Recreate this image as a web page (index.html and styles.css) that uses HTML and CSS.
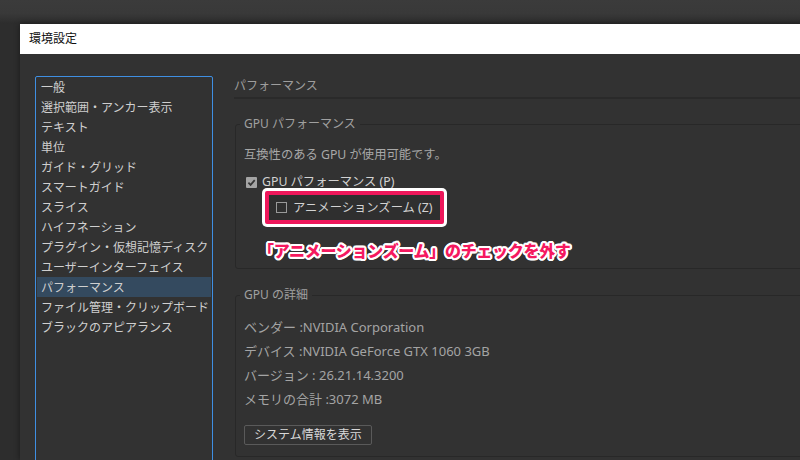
FILE: index.html
```html
<!DOCTYPE html>
<html lang="ja">
<head>
<meta charset="utf-8">
<title>環境設定</title>
<link rel="stylesheet" href="styles.css">
</head>
<body>
<div class="topbar"></div>
<div class="window">
  <div class="titlebar">環境設定</div>
  <div class="content">
    <ul class="navlist">
      <li>一般</li>
      <li>選択範囲・アンカー表示</li>
      <li>テキスト</li>
      <li>単位</li>
      <li>ガイド・グリッド</li>
      <li>スマートガイド</li>
      <li>スライス</li>
      <li>ハイフネーション</li>
      <li>プラグイン・仮想記憶ディスク</li>
      <li>ユーザーインターフェイス</li>
      <li class="active">パフォーマンス</li>
      <li>ファイル管理・クリップボード</li>
      <li>ブラックのアピアランス</li>
    </ul>
    <div class="main">
      <div class="section-title">パフォーマンス</div>
      <fieldset class="group group-perf">
        <legend>GPU パフォーマンス</legend>
        <div class="group-body">
          <p class="note">互換性のある GPU が使用可能です。</p>
          <div class="check-row">
            <span class="box checked"><svg width="11" height="11" viewBox="0 0 11 11"><rect x="0" y="0" width="11" height="11" rx="1" fill="#a4a4a4"/><path d="M2.4 5.6 L4.6 7.9 L8.7 3.1" fill="none" stroke="#353535" stroke-width="1.7"/></svg></span>
            <span class="check-label">GPU パフォーマンス (P)</span>
          </div>
          <div class="highlight">
            <div class="highlight-inner">
              <span class="box"></span>
              <span class="check-label">アニメーションズーム (Z)</span>
            </div>
          </div>
          <p class="annotation">「アニメーションズーム」のチェックを外す</p>
        </div>
      </fieldset>
      <fieldset class="group group-detail">
        <legend>GPU の詳細</legend>
        <div class="group-body">
          <p class="detail first">ベンダー :NVIDIA Corporation</p>
          <p class="detail">デバイス :NVIDIA GeForce GTX 1060 3GB</p>
          <p class="detail">バージョン : 26.21.14.3200</p>
          <p class="detail">メモリの合計 :3072 MB</p>
          <button class="sys-btn" type="button">システム情報を表示</button>
        </div>
      </fieldset>
    </div>
  </div>
</div>
</body>
</html>
```
FILE: styles.css
```css
* { box-sizing: border-box; }
html, body {
  margin: 0;
  padding: 0;
}
body {
  width: 800px;
  height: 460px;
  overflow: hidden;
  background: #2d2d2d;
  font-family: "Noto Sans", "Noto Sans CJK JP", sans-serif;
  font-size: 12px;
}
.topbar {
  height: 24px;
  background: linear-gradient(#3b3b3b 0, #393939 55%, #2c2c2c 100%);
}
.window {
  margin-left: 20px;
  width: 800px;
  height: 436px;
  background: #323232;
  box-shadow: 0 0 6px rgba(0, 0, 0, 0.45);
}
.titlebar {
  height: 30px;
  line-height: 30px;
  padding-left: 9px;
  background: #ffffff;
  color: #111111;
  font-size: 12px;
}
.content {
  display: flex;
  gap: 21px;
  padding: 22px 0 0 15px;
}
.navlist {
  list-style: none;
  margin: 0;
  width: 178px;
  height: 400px;
  flex: none;
  border: 1px solid #3f8fe2;
  border-radius: 2px;
  padding: 0 1px;
}
.navlist li {
  height: 20px;
  line-height: 22px;
  padding-left: 4px;
  color: #cfcfcf;
  white-space: nowrap;
  overflow: hidden;
}
.navlist li.active {
  background: #344a5f;
}
.main {
  flex: 1;
  min-width: 0;
}
.section-title {
  height: 23px;
  line-height: 20px;
  color: #9e9e9e;
  border-bottom: 2px solid #2a2a2a;
}
.group {
  margin: 0 0 0 1px;
  border: 1px solid #282828;
  border-radius: 3px;
  padding: 0 0 0 4px;
  min-width: 0;
}
.group legend {
  padding: 0 4px;
  line-height: 16px;
  color: #a0a0a0;
}
.group-perf {
  margin-top: 17px;
  padding-bottom: 8px;
}
.group-detail {
  margin-top: 18px;
  padding-bottom: 11px;
}
.group-body {
  padding-left: 4px;
}
.note {
  margin: 13px 0 0;
  line-height: 20px;
  font-size: 12.3px;
  color: #a8a8a8;
}
.check-row {
  display: flex;
  align-items: center;
  height: 20px;
  margin-top: 7px;
  padding-left: 2px;
}
.box {
  display: block;
  width: 11px;
  height: 11px;
  flex: none;
  border: 1px solid #9a9a9a;
  margin-right: 6px;
}
.box.checked {
  border: none;
  margin-right: 5px;
}
.box svg { display: block; }
.check-label {
  color: #d2d2d2;
  line-height: 20px;
  font-size: 12.3px;
  white-space: nowrap;
}
.highlight {
  margin: -4px 0 0 18px;
  width: 185px;
  height: 39px;
  padding: 3px;
  background: #ffffff;
  border-radius: 5px;
}
.highlight-inner {
  display: flex;
  align-items: center;
  height: 33px;
  padding-left: 7px;
  border: 4px solid #ee175b;
  border-radius: 2px;
  background: #2f2f2f;
}
.annotation {
  margin: 13px 0 0 14px;
  line-height: 20px;
  font-family: "Noto Sans CJK JP", sans-serif;
  font-weight: 900;
  font-size: 16px;
  letter-spacing: -0.3px;
  color: #f5195f;
  white-space: nowrap;
  text-shadow:
    2px 0 #fff, -2px 0 #fff, 0 2px #fff, 0 -2px #fff,
    1.4px 1.4px #fff, -1.4px 1.4px #fff, 1.4px -1.4px #fff, -1.4px -1.4px #fff,
    1px 1.8px #fff, -1px 1.8px #fff, 1px -1.8px #fff, -1px -1.8px #fff,
    1.8px 1px #fff, -1.8px 1px #fff, 1.8px -1px #fff, -1.8px -1px #fff;
}
.detail {
  margin: 0;
  line-height: 24px;
  font-size: 13px;
  color: #a4a4a4;
  white-space: nowrap;
}
.detail.first {
  margin-top: 12px;
}
.sys-btn {
  display: block;
  margin-top: 14px;
  height: 20px;
  padding: 0 9px;
  border: 1px solid #5a5a5a;
  border-radius: 2px;
  background: transparent;
  color: #d8d8d8;
  font-family: "Noto Sans", "Noto Sans CJK JP", sans-serif;
  font-size: 12px;
  line-height: 18px;
}
```
